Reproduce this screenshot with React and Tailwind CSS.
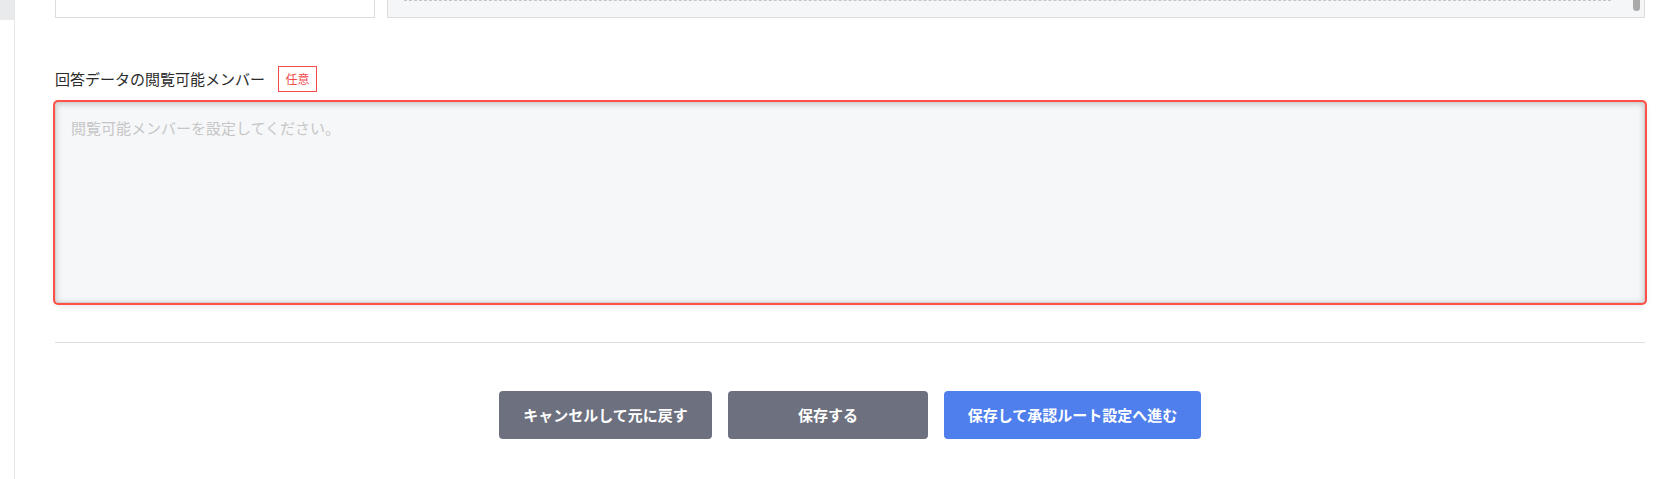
export default function App() {
  const font = { fontFamily: '"Noto Sans CJK JP", "Noto Sans", sans-serif' };

  return (
    <div className="flex h-[479px] w-[1670px] overflow-hidden bg-white" style={font}>
      {/* sidebar edge */}
      <div className="flex w-[15px] shrink-0 flex-col border-r border-[#e6e6e6]">
        <div className="h-[20px] bg-[#e9eaec]" />
      </div>

      <div className="flex flex-1 flex-col pl-[40px] pr-[25px]">
        {/* previous field (cut off at top) */}
        <div className="flex h-[18px] gap-[12px]">
          <div className="w-[320px] border-x border-b border-[#dcdcdc] bg-white" />
          <div className="relative flex-1 border-x border-b border-[#dcdcdc] bg-[#f5f6f8]">
            <div className="ml-[16px] mr-[33px] border-b border-dashed border-[#c4c4c4]" />
            <div className="absolute right-[4px] top-0 h-[11px] w-[7px] rounded-b-full bg-[#a9a9a9]" />
          </div>
        </div>

        {/* label */}
        <div className="mt-[48px] flex items-center">
          <span className="text-[15px] leading-[26px] text-[#2b2b2b]">回答データの閲覧可能メンバー</span>
          <span className="ml-[13px] flex h-[26px] w-[39px] items-center justify-center border border-[#f24b4b] text-[12px] text-[#f24b4b]">
            任意
          </span>
        </div>

        {/* textarea */}
        <textarea
          className="mt-[10px] h-[201px] w-full resize-none rounded-[3px] border border-[#d0d0d0] bg-[#f6f7f9] px-[15px] py-[14px] text-[15px] leading-[22px] text-[#333] shadow-[0_0_0_2px_#ff5147,0_3px_8px_rgba(0,0,0,0.10),inset_0_1px_6px_rgba(0,0,0,0.2)] outline-none placeholder:text-[#c6c6c6]"
          style={font}
          placeholder="閲覧可能メンバーを設定してください。"
        />

        <div className="mt-[39px] border-t border-[#dedede]" />

        {/* actions */}
        <div className="mt-[48px] flex justify-center gap-[16px]">
          <button className="h-[48px] w-[213px] rounded-[4px] bg-[#6d707e] text-[15px] font-bold text-white">
            キャンセルして元に戻す
          </button>
          <button className="h-[48px] w-[200px] rounded-[4px] bg-[#6d707e] text-[15px] font-bold text-white">
            保存する
          </button>
          <button className="h-[48px] w-[257px] rounded-[4px] bg-[#4f7fed] text-[15px] font-bold text-white">
            保存して承認ルート設定へ進む
          </button>
        </div>
      </div>
    </div>
  );
}
